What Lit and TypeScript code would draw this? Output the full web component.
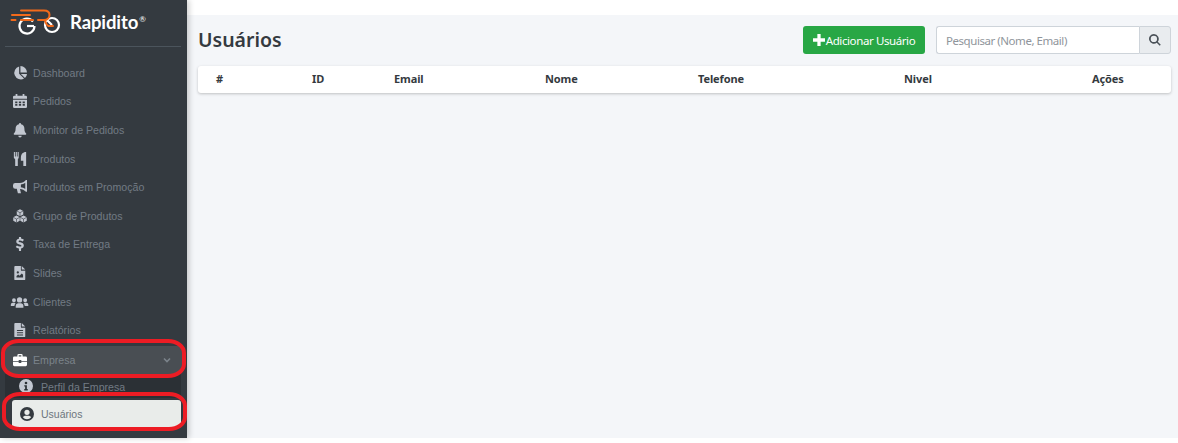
import { LitElement, html, css, svg } from "lit";
import { customElement } from "lit/decorators.js";

const cube = (cx: number, cy: number) => svg`
  <path d="M${cx} ${cy - 4}l3.700 2v4l-3.700 2-3.700-2v-4z"/>
  <path d="M${cx - 3.7} ${cy - 2}L${cx} ${cy}l3.700-2M${cx} ${cy}v4" fill="none" stroke="#343a40" stroke-width=".7"/>`;

const I: Record<string, any> = {
  pie: svg`<path d="M7 .6v8.200l5.600 5.600A7.500 7.500 0 1 1 7 .6zM8.500 0A7.500 7.500 0 0 1 16 7.500H8.500zM16 9a7.500 7.500 0 0 1-2.300 4.700L9 9z"/>`,
  cal: svg`<path fill-rule="evenodd" d="M3 0h2v2h6V0h2v2h1.500A1.500 1.500 0 0 1 16 3.500V5.500H0V3.500A1.500 1.500 0 0 1 1.500 2H3zM0 6.500h16v8a1.500 1.500 0 0 1-1.500 1.500h-13A1.500 1.500 0 0 1 0 14.500zM2.500 8.500v2h2.500v-2zm4.200 0v2h2.600v-2zm4.300 0v2h2.500v-2zm-8.500 3v2h2.500v-2zm4.200 0v2h2.600v-2zm4.300 0v2h2.500v-2z"/>`,
  bell: svg`<path d="M8 0a1.200 1.200 0 0 1 1.200 1.300c2.500.5 3.800 2.500 3.800 5 0 3.500 1 4.600 2 5.700.4.500.2 1.300-.6 1.300H1.600c-.8 0-1-.8-.6-1.300 1-1.100 2-2.200 2-5.700 0-2.500 1.300-4.500 3.800-5A1.200 1.200 0 0 1 8 0zM6 14.500h4a2 2 0 0 1-4 0z"/>`,
  food: svg`<path d="M1 0h1.200v5h.9V0h1.300v5h.9V0h1.200v6.500L5.500 8.500V16H2.500V8.500L1 6.500zM9 7C9 2.500 11 0 15 0v16h-3.200v-6H9z"/>`,
  mega: svg`<path fill-rule="evenodd" d="M16 0v13.500h-1.200C13 11.500 10.500 10.300 8 10.200l1.100 4.800H5.600L4.300 10H2.500A2.500 2.500 0 0 1 0 7.500v-1.500A2.500 2.500 0 0 1 2.500 3.500H8C10.500 3.400 13 2 14.800 0zM14 3.200C12.400 4.300 10.500 5 9 5.100v3.300c1.500.1 3.400.8 5 1.900z"/>`,
  cubes: svg`${cube(8, 4.2)}${cube(4, 11.5)}${cube(12, 11.5)}`,
  dollar: svg`<path d="M6.800 0h2.400v1.700c1.400.2 2.500.7 3.300 1.400l-1.400 1.900c-1-.7-2.100-1.100-3.200-1.100-1 0-1.500.3-1.500.9 0 .7.800.9 2.200 1.300 2 .6 3.800 1.400 3.800 3.600 0 1.800-1.200 3-3.200 3.300V16H6.800v-2.900c-1.500-.2-2.800-.8-3.700-1.600l1.400-1.900c1 .8 2.300 1.300 3.400 1.300 1.100 0 1.700-.3 1.700-1 0-.7-.8-1-2.200-1.400-2-.6-3.700-1.300-3.700-3.400 0-1.600 1.200-2.900 3.100-3.200z"/>`,
  slide: svg`<path fill-rule="evenodd" d="M2.500 0H9v4.500c0 .6.400 1 1 1h4V15a1 1 0 0 1-1 1H2.500a1 1 0 0 1-1-1V1a1 1 0 0 1 1-1zM10 0l4 4h-4zM4 13h7.500v-3l-1.500-1.500L7.500 11 6 9.700 4 11.500zM5.500 6a1.300 1.300 0 1 0 0 2.600 1.300 1.300 0 0 0 0-2.600z"/>`,
  users: svg`<path d="M10 2.600a3 3 0 1 1 0 6 3 3 0 0 1 0-6zM3.600 3.800a2.200 2.200 0 1 1 0 4.400 2.200 2.200 0 0 1 0-4.400zM16.400 3.800a2.200 2.200 0 1 1 0 4.400 2.200 2.200 0 0 1 0-4.400zM5.600 14.500v-2c0-1.800 1.400-3 3-3h2.800c1.600 0 3 1.200 3 3v2zM0 12.500v-1.500c0-1.200.9-2.200 2.200-2.200h2.200c.3.400.7.700 1.100.9-.8.600-1.300 1.600-1.400 2.800zM20 12.500v-1.500c0-1.200-.9-2.200-2.200-2.200h-2.200c-.3.400-.7.700-1.100.9.800.6 1.300 1.600 1.400 2.800z"/>`,
  file: svg`<path fill-rule="evenodd" d="M2.500 0H9v4.500c0 .6.400 1 1 1h4V15a1 1 0 0 1-1 1H2.500a1 1 0 0 1-1-1V1a1 1 0 0 1 1-1zM10 0l4 4h-4zM4.500 8v1.200h7V8zm0 2.500v1.200h7v-1.200zm0 2.500v1.200h7V13z"/>`,
  brief: svg`<path fill-rule="evenodd" d="M5 4V2.500A1.500 1.500 0 0 1 6.500 1h3A1.500 1.500 0 0 1 11 2.500V4h3.500A1.500 1.500 0 0 1 16 5.500V9H9.500V8h-3v1H0V5.500A1.500 1.500 0 0 1 1.500 4zM6.500 2.500V4h3V2.500zM0 10h6.500v1.500h3V10H16v3.500a1.500 1.500 0 0 1-1.500 1.500h-13A1.500 1.500 0 0 1 0 13.500z"/>`,
  info: svg`<path fill-rule="evenodd" d="M8 0a8 8 0 1 1 0 16A8 8 0 0 1 8 0zm0 3a1.500 1.500 0 1 0 0 3 1.500 1.500 0 0 0 0-3zM6 7v1.500h1v3H6V13h4v-1.500H9V7z"/>`,
  user: svg`<path fill-rule="evenodd" d="M8 0a8 8 0 1 1 0 16A8 8 0 0 1 8 0zm0 3a3 3 0 1 0 0 6 3 3 0 0 0 0-6zm0 11a6 6 0 0 0 4.700-2.300C12 10.600 10.800 10 9.500 10h-3c-1.300 0-2.500.6-3.200 1.700A6 6 0 0 0 8 14z"/>`,
};

const items: [string, string][] = [
  ["pie", "Dashboard"],
  ["cal", "Pedidos"],
  ["bell", "Monitor de Pedidos"],
  ["food", "Produtos"],
  ["mega", "Produtos em Promoção"],
  ["cubes", "Grupo de Produtos"],
  ["dollar", "Taxa de Entrega"],
  ["slide", "Slides"],
  ["users", "Clientes"],
  ["file", "Relatórios"],
];

const cols: [string, number][] = [
  ["#", 96],
  ["ID", 82],
  ["Email", 151],
  ["Nome", 153],
  ["Telefone", 206],
  ["Nivel", 188],
  ["Ações", 79],
];

@customElement("app-root")
export class AppRoot extends LitElement {
  static styles = css`
    :host { display: block; width: 1178px; height: 443px; overflow: hidden; background: #fff; position: relative; font-family: "Liberation Sans", Arial, sans-serif; }
    .layout { display: flex; height: 438px; }
    .side { width: 187px; flex: none; background: #343a40; box-sizing: border-box; padding: 0 5px; display: flex; flex-direction: column; position: relative; z-index: 1; box-shadow: 2px 0 6px rgba(0,0,0,.2); }
    .brand { height: 47px; box-sizing: border-box; border-bottom: 1px solid #4b545c; display: flex; align-items: flex-start; padding: 8px 0 0 5px; gap: 8px; margin-right: 1px; }
    .brand svg { flex: none; }
    .brand b { font: 700 18.500px/1 "Lato", sans-serif; color: #fff; margin-top: 5px; letter-spacing: -.1px; }
    .brand sup { font-size: 8px; font-weight: 400; vertical-align: 7px; line-height: 0; margin-left: 1px; }
    nav { display: flex; flex-direction: column; padding-top: 11.600px; }
    .item { display: flex; align-items: center; height: 28.600px; padding-left: 7px; color: #727b84; font-size: 10.600px; flex: none; }
    .item svg { width: 16px; height: 14px; fill: #c2c7d0; flex: none; margin-right: 5px; overflow: visible; }
    .emp { background: #494e53; border-radius: 3px; height: 28px; margin-top: 1px; position: relative; color: #7b838a; }
    .emp svg { fill: #fff; }
    .emp .chev { position: absolute; right: 11px; width: 8px; height: 8px; fill: none; stroke: #7b838a; stroke-width: 1.600; margin: 0; }
    .sub { background: #2b3035; height: 24px; display: flex; align-items: center; padding-left: 14px; font-size: 10.600px; color: #727b84; gap: 8px; margin-right: 1px; }
    .sub svg { width: 14px; height: 14px; fill: #c2c7d0; flex: none; }
    .sub span { margin-top: 2px; }
    .cur { display: flex; align-items: center; background: #e9ecea; border-radius: 3px; height: 28px; margin: 2px 1px 0 7px; padding-left: 8px; color: #6c757d; font-size: 10.500px; gap: 7px; }
    .cur svg { width: 14px; height: 14px; fill: #343a40; flex: none; }
    main { flex: 1; min-width: 0; margin-top: 15px; background: #f4f6f9; box-sizing: border-box; padding: 11px 7px 0 11px; }
    .head { display: flex; align-items: center; height: 28px; }
    h1 { margin: 0 0 1px; font: 600 19.500px/1 "Noto Sans", sans-serif; color: #343a40; flex: 1; }
    .add { display: flex; align-items: center; height: 28px; width: 122px; box-sizing: border-box; justify-content: center; background: #28a745; border-radius: 3px; color: #fff; font: 400 11.500px "Noto Sans", sans-serif; letter-spacing: -.4px; margin-right: 11px; gap: 1px; }
    .add svg { width: 12px; height: 12px; fill: #fff; }
    .search { display: flex; width: 235px; height: 28px; box-sizing: border-box; }
    .inp { flex: 1; background: #fff; border: 1px solid #ced4da; border-right: none; border-radius: 3px 0 0 3px; box-sizing: border-box; padding-left: 9px; display: flex; align-items: center; color: #8f959b; font: 400 11.500px "Noto Sans", sans-serif; letter-spacing: -.45px; }
    .sb { width: 32px; box-sizing: border-box; background: #e9ecef; border: 1px solid #ced4da; border-radius: 0 3px 3px 0; display: flex; align-items: center; justify-content: center; }
    .sb svg { width: 12px; height: 12px; fill: #495057; }
    .table { margin-top: 12px; height: 27px; box-sizing: border-box; padding: 0 0 2px 18px; background: #fff; border-radius: 3px; box-shadow: 0 1px 3px rgba(0,0,0,.22); display: flex; align-items: center; font: 700 11px "Noto Sans", sans-serif; color: #343a40; letter-spacing: -.1px; }
    .table span { flex: none; }
    .mark { position: absolute; border: 4px solid #ed1c24; z-index: 2; box-sizing: border-box; pointer-events: none; }
    .m1 { left: 1px; top: 339px; width: 185px; height: 39px; border-radius: 18px / 14px; }
    .m2 { left: 2px; top: 392px; width: 185px; height: 39px; border-radius: 18px / 14px; }
  `;

  render() {
    return html`
      <div class="layout">
        <aside class="side">
          <div class="brand">
            <svg width="52" height="28" viewBox="10 8 52 28" fill="none">
              <g stroke="#fff" stroke-width="2.200" fill="none">
                <path d="M33 21.500a7.500 7.500 0 1 0 1.500 4.500"/>
                <path d="M27 26h7"/>
                <circle cx="52" cy="25" r="7"/>
                <path d="M47 20l5 5"/>
              </g>
              <g stroke="#f26a1b" stroke-width="2" stroke-linecap="round" stroke-linejoin="round">
                <path d="M21 10.500H44c4 0 5.500 2 5.500 4.500s-2 5-5.500 5H38"/>
                <path d="M45 20.500c.5 2 1 4.500 3.500 5.500H53"/>
                <path d="M12 15h18M11.500 20h4M21 20h12"/>
              </g>
            </svg>
            <b>Rapidito<sup>®</sup></b>
          </div>
          <nav>
            ${items.map(([i, t]) => html`<div class="item"><svg viewBox="${i === "users" ? "2.5" : "0"} 0 16 16">${I[i]}</svg>${t}</div>`)}
            <div class="item emp">
              <svg viewBox="0 0 16 16">${I.brief}</svg>Empresa
              <svg class="chev" viewBox="0 0 8 8"><path d="M1 2.500l3 3 3-3"/></svg>
            </div>
            <div class="sub"><svg viewBox="0 0 16 16">${I.info}</svg><span>Perfil da Empresa</span></div>
            <div class="cur"><svg viewBox="0 0 16 16">${I.user}</svg>Usuários</div>
          </nav>
        </aside>
        <main>
          <div class="head">
            <h1>Usuários</h1>
            <div class="add"><svg viewBox="0 0 11 11"><path d="M4 0h3v4h4v3H7v4H4V7H0V4h4z"/></svg>Adicionar Usuário</div>
            <div class="search">
              <div class="inp">Pesquisar (Nome, Email)</div>
              <div class="sb"><svg viewBox="0 0 16 16"><path fill-rule="evenodd" d="M6.500 0a6.500 6.500 0 0 1 5.200 10.400l4 4-1.400 1.400-4-4A6.500 6.500 0 1 1 6.500 0zm0 2.300a4.200 4.200 0 1 0 0 8.400 4.200 4.200 0 0 0 0-8.400z"/></svg></div>
            </div>
          </div>
          <div class="table">
            ${cols.map(([t, w]) => html`<span style="width:${w}px">${t}</span>`)}
          </div>
        </main>
      </div>
      <div class="mark m1"></div>
      <div class="mark m2"></div>
    `;
  }
}
